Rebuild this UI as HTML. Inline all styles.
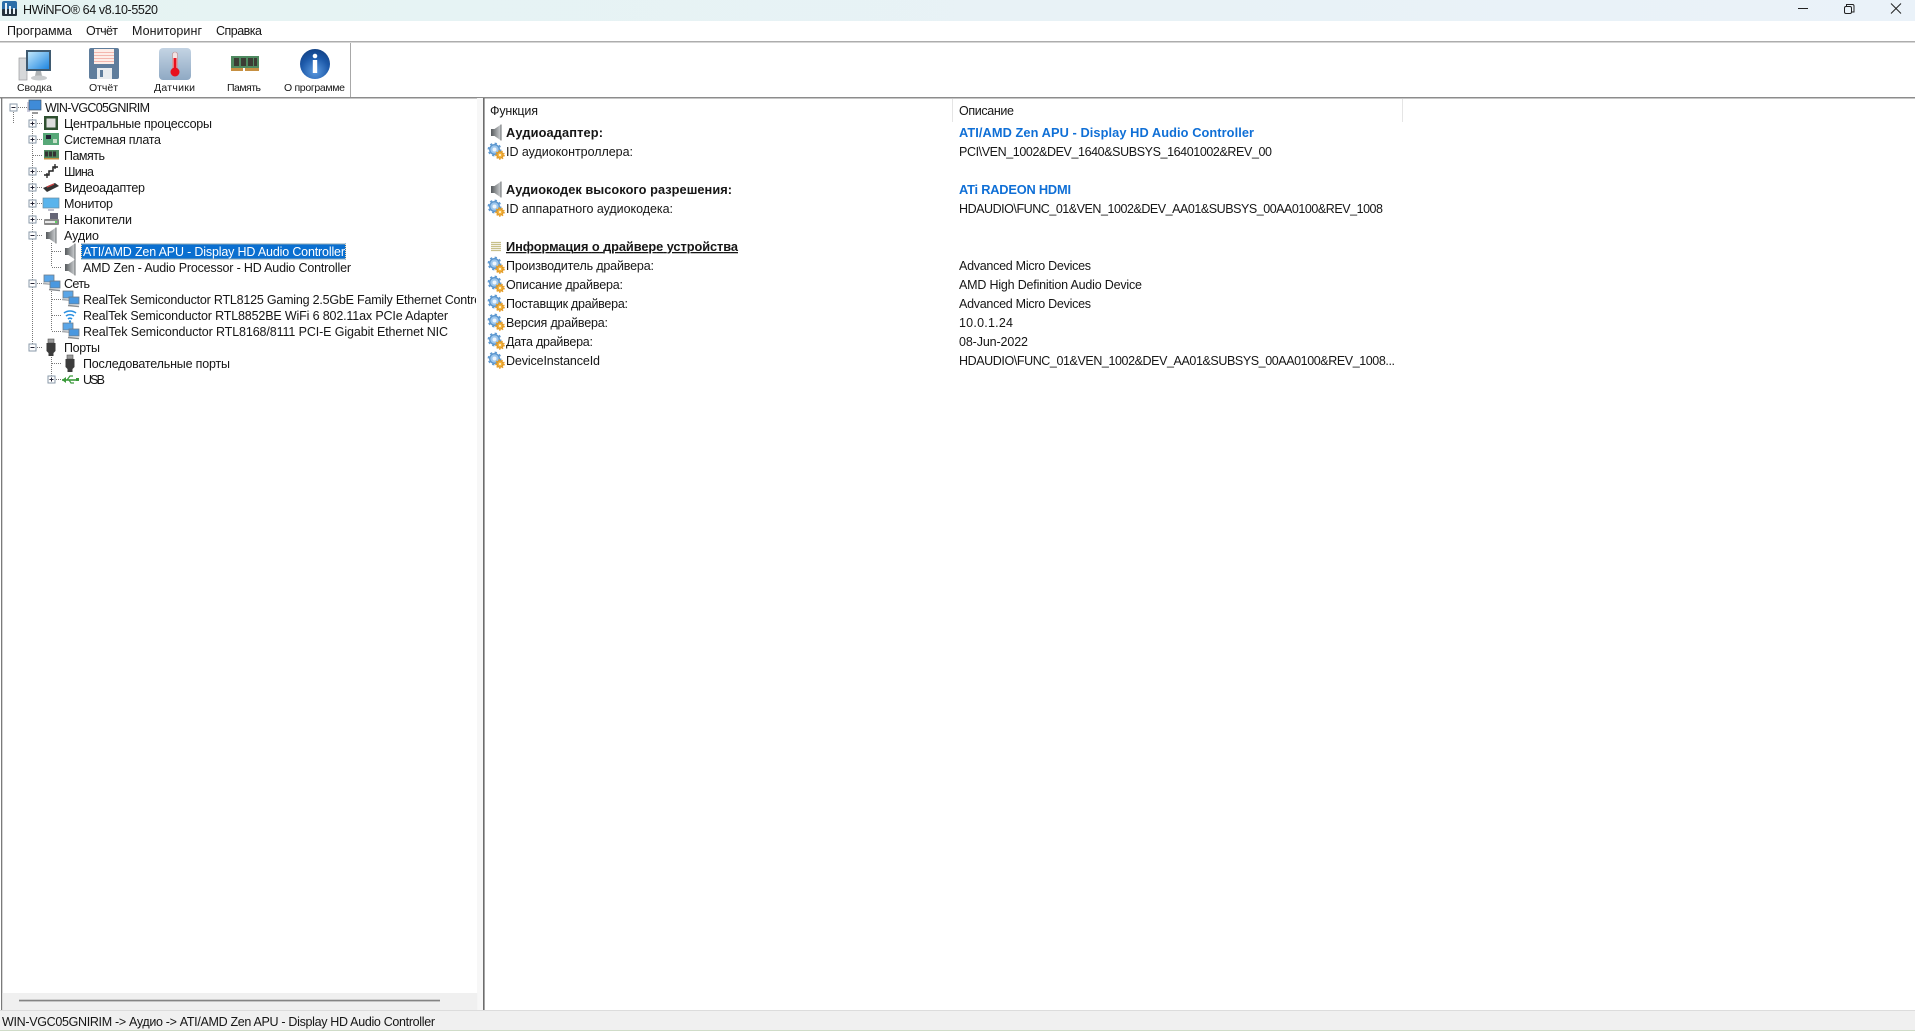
<!DOCTYPE html>
<html lang="ru"><head><meta charset="utf-8"><title>HWiNFO 64</title>
<style>
html,body{margin:0;padding:0;background:#fff;width:1915px;height:1031px;overflow:hidden}
svg{display:block}
text{font-family:"Liberation Sans","Noto Sans CJK SC",sans-serif;font-size:12.5px;fill:#161616;white-space:pre}
.s{font-size:10.5px}
.b{font-weight:bold;font-size:12.8px}
.bl{font-weight:bold;fill:#0f6fd6;font-size:12.8px}
</style></head><body>
<svg xmlns="http://www.w3.org/2000/svg" width="1915" height="1031" viewBox="0 0 1915 1031">
<defs>
<linearGradient id="tb" x1="0" x2="1" y1="0" y2="0"><stop offset="0" stop-color="#e5f3f2"/><stop offset="1" stop-color="#eaf2f9"/></linearGradient>
<linearGradient id="scr" x1="0" x2="1" y1="0" y2="1"><stop offset="0" stop-color="#bfe6fb"/><stop offset="1" stop-color="#1f86e0"/></linearGradient>
<linearGradient id="thermo" x1="0" x2="0" y1="0" y2="1"><stop offset="0" stop-color="#c4d4e4"/><stop offset="1" stop-color="#8fa9c4"/></linearGradient>
<radialGradient id="info" cx=".5" cy=".75" r=".8"><stop offset="0" stop-color="#5b9ae0"/><stop offset=".6" stop-color="#1c58a8"/><stop offset="1" stop-color="#123f80"/></radialGradient>
<linearGradient id="spk" x1="0" x2="1" y1="0" y2="0"><stop offset="0" stop-color="#55595c"/><stop offset="1" stop-color="#d0d3d5"/></linearGradient>
<g id="minus"><rect x=".5" y=".5" width="7" height="7" fill="#fff" stroke="#8a99a8"/><path d="M2 4h4" stroke="#223" stroke-width="1"/></g>
<g id="plus"><rect x=".5" y=".5" width="7" height="7" fill="#fff" stroke="#8a99a8"/><path d="M2 4h4M4 2v4" stroke="#223" stroke-width="1"/></g>
<g id="speaker"><path d="M0 4.500h3.500L10 0v16L3.500 11.500H0z" fill="url(#spk)"/><path d="M10 0v16" stroke="#6a6e70"/></g>
<g id="gear"><circle cx="6.500" cy="6.500" r="4.800" fill="#9cc6ec" stroke="#5a94cc" stroke-width="1.300"/><circle cx="6.500" cy="6.500" r="6" fill="none" stroke="#5f9ad2" stroke-width="1.800" stroke-dasharray="2.300 2.400"/><circle cx="6.500" cy="6.500" r="2" fill="#eef5fc"/><circle cx="12" cy="12" r="3.200" fill="#f4b23c" stroke="#dc9420"/><circle cx="12" cy="12" r="4.200" fill="none" stroke="#eaa028" stroke-width="1.200" stroke-dasharray="1.500 1.500"/><circle cx="12" cy="12" r="1.100" fill="#fff3d0"/></g>
<g id="net"><rect x="1" y="0" width="10" height="7" fill="#5aa6e8" stroke="#6f7c88" stroke-width=".8"/><path d="M0 8.500l10 1" stroke="#a8acb0" stroke-width="1.500"/><rect x="7" y="6" width="10" height="7" fill="#4a98e0" stroke="#6f7c88" stroke-width=".8"/><path d="M6 14.500l11 1" stroke="#8a8e92" stroke-width="1.600"/></g>
<g id="plug"><rect x="4" y="0" width="6" height="4" fill="#9a9a9a" stroke="#555" stroke-width=".6"/><path d="M2.500 4h9v8l-2 2v3h-5v-3l-2-2z" fill="#3c3c3c"/></g>
<g id="ram"><rect x="0" y="0" width="15" height="9" fill="#4f8a60"/><rect x="1" y="1.500" width="3" height="5" fill="#333"/><rect x="5" y="1.500" width="3" height="5" fill="#333"/><rect x="9" y="1.500" width="3" height="5" fill="#333"/><rect x="0" y="8" width="15" height="1.500" fill="#c09040"/></g>
</defs>

<!-- window chrome -->
<rect width="1915" height="1031" fill="#fff"/>
<rect width="1915" height="21" fill="url(#tb)"/>
<rect x="2" y="1" width="15" height="14" rx="2" fill="#2b6ea8"/>
<rect x="2" y="9" width="15" height="7" rx="1" fill="#26323c"/>
<path d="M5 3h2v11H5zM9 6h2v8H9zM13 8h2v6h-2z" fill="#e8f1f7"/>
<text x="23" y="14" textLength="135" lengthAdjust="spacing">HWiNFO® 64 v8.10-5520</text>
<path d="M1798 8.500h10" stroke="#222" stroke-width="1"/>
<rect x="1844.500" y="6.500" width="7" height="7" rx="1.500" fill="none" stroke="#222"/>
<path d="M1846.500 6V4.500h6a1.500 1.500 0 0 1 1.500 1.500v6h-2" fill="none" stroke="#222"/>
<path d="M1891 3.500l10 10M1901 3.500l-10 10" stroke="#222" stroke-width="1"/>

<text x="7" y="35" textLength="65" lengthAdjust="spacing">Программа</text>
<text x="86" y="35" textLength="32" lengthAdjust="spacing">Отчёт</text>
<text x="132" y="35" textLength="70" lengthAdjust="spacing">Мониторинг</text>
<text x="216" y="35" textLength="46" lengthAdjust="spacing">Справка</text>
<rect y="41" width="1915" height="1.500" fill="#adadad"/>

<!-- toolbar -->
<rect x="19" y="58" width="8" height="22" fill="#d6d8da" stroke="#9a9c9e" stroke-width=".7"/>
<rect x="26" y="50" width="25" height="21" fill="#3f5a70"/>
<rect x="28" y="52" width="21" height="17" fill="url(#scr)"/>
<path d="M36 71h5l1 5h-7z" fill="#aeb2b4"/>
<ellipse cx="39" cy="78" rx="8" ry="2.500" fill="#c9ccce"/>

<rect x="89" y="48" width="30" height="31" rx="2" fill="#5f7d9c"/>
<rect x="94" y="49" width="20" height="15" fill="#fdeee8"/>
<path d="M94 52.500h20M94 55.500h20M94 58.500h20M94 61.500h20" stroke="#f0a59a" stroke-width=".8"/>
<rect x="97" y="68" width="15" height="11" fill="#e8ecef"/>
<rect x="100" y="70" width="3" height="7" fill="#5f7d9c"/>

<rect x="159" y="48" width="32" height="32" rx="4" fill="url(#thermo)"/>
<rect x="172.500" y="52" width="5" height="18" rx="2.500" fill="#f3e3e3" stroke="#b88" stroke-width=".6"/>
<rect x="173.500" y="58" width="3" height="12" fill="#e8101c"/>
<circle cx="175" cy="72" r="4.500" fill="#e8101c"/>

<rect x="231" y="56" width="28" height="13" fill="#4f8a60"/>
<rect x="234" y="58" width="5" height="8" fill="#3c3c34"/><rect x="241" y="58" width="5" height="8" fill="#3c3c34"/><rect x="248" y="58" width="5" height="8" fill="#3c3c34"/><rect x="254" y="58" width="3" height="8" fill="#3c3c34"/>
<rect x="231" y="68" width="28" height="3" fill="#c69042"/>
<rect x="243" y="68" width="2" height="3" fill="#fff"/>

<circle cx="315" cy="64" r="15" fill="url(#info)"/>
<circle cx="315" cy="56" r="2.300" fill="#fff"/>
<rect x="312.800" y="60" width="4.400" height="13" fill="#fff"/>

<text class="s" x="17" y="91" textLength="35" lengthAdjust="spacing">Сводка</text>
<text class="s" x="89" y="91" textLength="29" lengthAdjust="spacing">Отчёт</text>
<text class="s" x="154" y="91" textLength="41" lengthAdjust="spacing">Датчики</text>
<text class="s" x="227" y="91" textLength="34" lengthAdjust="spacing">Память</text>
<text class="s" x="284" y="91" textLength="61" lengthAdjust="spacing">О программе</text>
<rect x="350" y="43" width="1" height="54" fill="#a8a8a8"/>
<rect y="97" width="1915" height="1.500" fill="#8c8c8c"/>

<!-- panes -->
<rect x="1" y="98" width="1.300" height="912" fill="#7a7a7a"/>
<rect x="477" y="98" width="6" height="912" fill="#f7f7f7"/>
<rect x="483" y="98" width="1.600" height="912" fill="#6c6c6c"/>
<rect x="2.300" y="993" width="475" height="17" fill="#f0f0f0"/>
<rect x="19" y="999.700" width="421" height="1.700" fill="#858585"/>
<rect y="1010" width="1915" height="21" fill="#f0f0f0"/>
<rect y="1010" width="1915" height="1" fill="#dcdcdc"/>
<rect y="1030" width="1915" height="1" fill="#cfdcc8"/>
<text x="2" y="1026" textLength="433" lengthAdjust="spacing">WIN-VGC05GNIRIM -&gt; Аудио -&gt; ATI/AMD Zen APU - Display HD Audio Controller</text>

<!-- tree lines -->
<g stroke="#777" stroke-width="1" stroke-dasharray="1 1" fill="none">
<path d="M13.500 112V123M32.500 115V347M51.500 243V267M51.500 291V331M51.500 355V379"/>
<path d="M18 107.500h9M37 123.500h6M37 139.500h6M33 155.500h10M37 171.500h6M37 187.500h6M37 203.500h6M37 219.500h6M37 235.500h6M52 251.500h10M52 267.500h10M37 283.500h6M52 299.500h10M52 315.500h10M52 331.500h10M37 347.500h6M52 363.500h10M56 379.500h6"/>
</g>
<use href="#minus" x="9.500" y="103.500"/>
<use href="#plus" x="28.500" y="119.500"/><use href="#plus" x="28.500" y="135.500"/>
<use href="#plus" x="28.500" y="167.500"/><use href="#plus" x="28.500" y="183.500"/><use href="#plus" x="28.500" y="199.500"/><use href="#plus" x="28.500" y="215.500"/>
<use href="#minus" x="28.500" y="231.500"/><use href="#minus" x="28.500" y="279.500"/><use href="#minus" x="28.500" y="343.500"/>
<use href="#plus" x="47.500" y="375.500"/>

<!-- tree icons -->
<rect x="27" y="102" width="3" height="10" fill="#ccd"/><rect x="29" y="100" width="12" height="10" fill="#3f8bd8" stroke="#456" stroke-width=".7"/><path d="M32 113h6" stroke="#999" stroke-width="2"/>
<rect x="44" y="116" width="14" height="14" fill="#2f5030"/><rect x="46.500" y="118.500" width="9" height="9" fill="#ddd"/>
<rect x="43" y="133" width="16" height="12" fill="#57a878"/><rect x="46" y="135" width="5" height="4" fill="#223"/><rect x="53" y="139" width="4" height="4" fill="#c6e0c8"/>
<use href="#ram" x="44" y="150"/>
<path d="M44 175h5v-4h4v-4h5" fill="none" stroke="#222" stroke-width="1.500"/><path d="M47 178v-5M55 169v-5" stroke="#222" stroke-width="1.300"/>
<path d="M43 188l12-5 4 3-12 6z" fill="#333"/><path d="M47 187l7-3" stroke="#c44" stroke-width="1.300"/>
<rect x="43" y="198" width="16" height="10" fill="#5ab4ec" stroke="#6a8aa0" stroke-width=".7"/><path d="M48 210h6" stroke="#aab" stroke-width="1.500"/>
<rect x="50" y="213" width="8" height="6" fill="#667" /><rect x="44" y="219" width="15" height="6" rx="1" fill="#888"/><rect x="45" y="221" width="12" height="2" fill="#e8e8e8"/><circle cx="56" cy="222" r="1" fill="#3c3"/>
<use href="#speaker" x="46" y="227.500"/>
<use href="#speaker" x="65" y="243.500"/>
<use href="#speaker" x="65" y="259.500"/>
<use href="#net" x="43" y="275"/>
<use href="#net" x="62" y="291"/>
<g fill="none" stroke="#2a8fe0" stroke-width="1.600"><path d="M64 313a10 10 0 0 1 12 0M66 316a6.500 6.500 0 0 1 8 0M68 319a3 3 0 0 1 4 0"/></g><circle cx="70" cy="321.500" r="1.200" fill="#2a8fe0"/>
<use href="#net" x="62" y="323"/>
<use href="#plug" x="44" y="339"/>
<use href="#plug" x="63" y="355"/>
<path d="M62 380h14" stroke="#3a9a3a" stroke-width="1.600"/><path d="M62 380l4-3v6zM76 378h3v3h-3z" fill="#3a9a3a"/><path d="M67 380l3-4h3M69 380l2 3h3" fill="none" stroke="#3a9a3a" stroke-width="1.200"/>

<!-- tree text -->
<text x="45" y="112" textLength="105" lengthAdjust="spacing">WIN-VGC05GNIRIM</text>
<text x="64" y="128" textLength="148" lengthAdjust="spacing">Центральные процессоры</text>
<text x="64" y="144" textLength="97" lengthAdjust="spacing">Системная плата</text>
<text x="64" y="160" textLength="41" lengthAdjust="spacing">Память</text>
<text x="64" y="176" textLength="30" lengthAdjust="spacing">Шина</text>
<text x="64" y="192" textLength="81" lengthAdjust="spacing">Видеоадаптер</text>
<text x="64" y="208" textLength="49" lengthAdjust="spacing">Монитор</text>
<text x="64" y="224" textLength="68" lengthAdjust="spacing">Накопители</text>
<text x="64" y="240" textLength="35" lengthAdjust="spacing">Аудио</text>
<rect x="81" y="243.500" width="265" height="16" fill="#0a6fd0"/>
<rect x="81.500" y="244" width="264" height="15" fill="none" stroke="#ffd9a0" stroke-width="1" stroke-dasharray="1 1"/>
<text x="83" y="256" textLength="262" lengthAdjust="spacing" style="fill:#fff">ATI/AMD Zen APU - Display HD Audio Controller</text>
<text x="83" y="272" textLength="268" lengthAdjust="spacing">AMD Zen - Audio Processor - HD Audio Controller</text>
<text x="64" y="288" textLength="26" lengthAdjust="spacing">Сеть</text>
<svg x="0" y="290" width="476" height="20"><text x="83" y="14" textLength="414" lengthAdjust="spacing">RealTek Semiconductor RTL8125 Gaming 2.5GbE Family Ethernet Controller</text></svg>
<text x="83" y="320" textLength="365" lengthAdjust="spacing">RealTek Semiconductor RTL8852BE WiFi 6 802.11ax PCIe Adapter</text>
<text x="83" y="336" textLength="365" lengthAdjust="spacing">RealTek Semiconductor RTL8168/8111 PCI-E Gigabit Ethernet NIC</text>
<text x="64" y="352" textLength="36" lengthAdjust="spacing">Порты</text>
<text x="83" y="368" textLength="147" lengthAdjust="spacing">Последовательные порты</text>
<text x="83" y="384" textLength="22" lengthAdjust="spacing">USB</text>

<!-- list header -->
<rect x="952" y="99" width="1" height="23" fill="#e5e5e5"/>
<rect x="1402" y="99" width="1" height="23" fill="#e5e5e5"/>
<text x="490" y="115" textLength="48" lengthAdjust="spacing">Функция</text>
<text x="959" y="115" textLength="55" lengthAdjust="spacing">Описание</text>

<!-- list icons -->
<use href="#speaker" x="491" y="124.500"/>
<use href="#gear" x="488" y="143"/>
<use href="#speaker" x="491" y="181.500"/>
<use href="#gear" x="488" y="200"/>
<g stroke="#c8c08a" stroke-width="1.200"><path d="M491 242.500h10M491 244.500h10M491 246.500h10M491 248.500h10M491 250.500h10"/></g>
<use href="#gear" x="488" y="257"/>
<use href="#gear" x="488" y="276"/>
<use href="#gear" x="488" y="295"/>
<use href="#gear" x="488" y="314"/>
<use href="#gear" x="488" y="333"/>
<use href="#gear" x="488" y="352"/>

<!-- list labels -->
<text class="b" x="506" y="137" textLength="97" lengthAdjust="spacing">Аудиоадаптер:</text>
<text x="506" y="156" textLength="127" lengthAdjust="spacing">ID аудиоконтроллера:</text>
<text class="b" x="506" y="194" textLength="226" lengthAdjust="spacing">Аудиокодек высокого разрешения:</text>
<text x="506" y="213" textLength="167" lengthAdjust="spacing">ID аппаратного аудиокодека:</text>
<text class="b" x="506" y="251" textLength="232" lengthAdjust="spacing" text-decoration="underline">Информация о драйвере устройства</text>
<text x="506" y="270" textLength="148" lengthAdjust="spacing">Производитель драйвера:</text>
<text x="506" y="289" textLength="117" lengthAdjust="spacing">Описание драйвера:</text>
<text x="506" y="308" textLength="122" lengthAdjust="spacing">Поставщик драйвера:</text>
<text x="506" y="327" textLength="102" lengthAdjust="spacing">Версия драйвера:</text>
<text x="506" y="346" textLength="87" lengthAdjust="spacing">Дата драйвера:</text>
<text x="506" y="365" textLength="94" lengthAdjust="spacing">DeviceInstanceId</text>

<!-- list values -->
<text class="bl" x="959" y="137" textLength="295" lengthAdjust="spacing">ATI/AMD Zen APU - Display HD Audio Controller</text>
<text x="959" y="156" textLength="313" lengthAdjust="spacing">PCI\VEN_1002&amp;DEV_1640&amp;SUBSYS_16401002&amp;REV_00</text>
<text class="bl" x="959" y="194" textLength="112" lengthAdjust="spacing">ATi RADEON HDMI</text>
<text x="959" y="213" textLength="424" lengthAdjust="spacing">HDAUDIO\FUNC_01&amp;VEN_1002&amp;DEV_AA01&amp;SUBSYS_00AA0100&amp;REV_1008</text>
<text x="959" y="270" textLength="132" lengthAdjust="spacing">Advanced Micro Devices</text>
<text x="959" y="289" textLength="183" lengthAdjust="spacing">AMD High Definition Audio Device</text>
<text x="959" y="308" textLength="132" lengthAdjust="spacing">Advanced Micro Devices</text>
<text x="959" y="327" textLength="54" lengthAdjust="spacing">10.0.1.24</text>
<text x="959" y="346" textLength="69" lengthAdjust="spacing">08-Jun-2022</text>
<text x="959" y="365" textLength="436" lengthAdjust="spacing">HDAUDIO\FUNC_01&amp;VEN_1002&amp;DEV_AA01&amp;SUBSYS_00AA0100&amp;REV_1008...</text>
</svg>
</body></html>
